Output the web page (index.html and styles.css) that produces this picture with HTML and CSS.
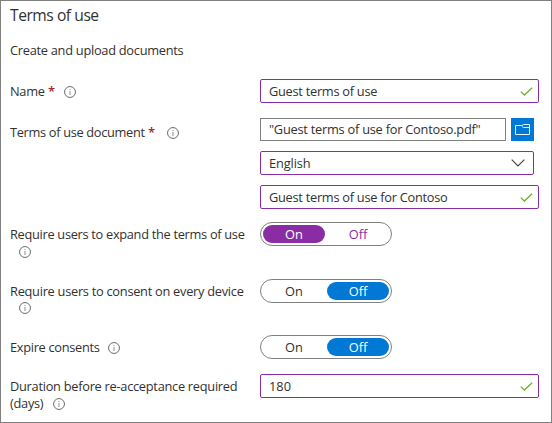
FILE: index.html
```html
<!DOCTYPE html>
<html lang="en">
<head>
<meta charset="utf-8">
<title>Terms of use</title>
<link rel="stylesheet" href="styles.css">
</head>
<body>
<svg width="0" height="0" class="defs">
  <symbol id="info" viewBox="0 0 12 12"><circle cx="6" cy="6" r="5.45" fill="none" stroke="#6b6b6b"/><path d="M6 5v4M6 3v1.1" stroke="#999" stroke-width="1.1"/></symbol>
  <symbol id="check" viewBox="0 0 13 9"><path d="M.8 4.6 4.4 8 12.1.7" fill="none" stroke="#6bb02a" stroke-width="1.3"/></symbol>
</svg>
<main class="panel">
  <h1 class="title">Terms of use</h1>
  <p class="subtitle">Create and upload documents</p>
  <form class="form">
    <div class="row row-name">
      <div class="label"><span class="t-name">Name</span><span class="req">*</span><svg class="info i-name"><use href="#info"/></svg></div>
      <div class="field wide"><span>Guest terms of use</span><svg class="check"><use href="#check"/></svg></div>
    </div>
    <div class="row row-doc">
      <div class="label"><span class="t-doc">Terms of use document</span><span class="req">*</span><svg class="info i-doc"><use href="#info"/></svg></div>
      <div class="stack">
        <div class="picker">
          <div class="field file"><span>"Guest terms of use for Contoso.pdf"</span></div>
          <button type="button" class="browse" aria-label="Browse"><svg width="15" height="11" viewBox="0 0 15 11"><path d="M7 1.5H.5v9h14v-9M7 1.5 8.500.5h6v3h-6L7 2.500" fill="none" stroke="#e4f1fb"/></svg></button>
        </div>
        <div class="field select"><span class="v-lang">English</span><svg class="chevron" width="14" height="8" viewBox="0 0 14 8"><path d="M.7.7 7 7 13.3.7" fill="none" stroke="#444" stroke-width="1.2"/></svg></div>
        <div class="field wide"><span>Guest terms of use for Contoso</span><svg class="check"><use href="#check"/></svg></div>
      </div>
    </div>
    <div class="row row-expand">
      <div class="label two"><span class="t-expand">Require users to expand the terms of use</span><svg class="info i-wrap"><use href="#info"/></svg></div>
      <div class="toggle purple"><span class="opt on">On</span><span class="opt">Off</span></div>
    </div>
    <div class="row row-device">
      <div class="label two"><span>Require users to consent on every device</span><svg class="info i-wrap"><use href="#info"/></svg></div>
      <div class="toggle"><span class="opt">On</span><span class="opt on">Off</span></div>
    </div>
    <div class="row row-expire">
      <div class="label"><span class="t-expire">Expire consents</span><svg class="info i-expire"><use href="#info"/></svg></div>
      <div class="toggle"><span class="opt">On</span><span class="opt on">Off</span></div>
    </div>
    <div class="row row-days">
      <div class="label two"><span>Duration before re-acceptance required</span><div class="line"><span class="t-days">(days)</span><svg class="info i-days"><use href="#info"/></svg></div></div>
      <div class="field wide"><span class="v-days">180</span><svg class="check"><use href="#check"/></svg></div>
    </div>
  </form>
</main>
</body>
</html>
```
FILE: styles.css
```css
* { box-sizing: border-box; }
body { margin: 0; background: #fff; }
.defs { display: none; }
.panel {
  width: 552px;
  height: 423px;
  border: 1px solid #808080;
  padding: 0 0 0 9px;
  overflow: hidden;
  color: #323130;
  font: 12.8px/17px "Open Sans", "Noto Sans", sans-serif;
  letter-spacing: -0.27px;
  white-space: nowrap;
}
.title { margin: 3px 0 0; font-size: 15.6px; line-height: 22px; font-weight: 400; letter-spacing: -0.45px; }
.subtitle { margin: 16px 0 0; line-height: 17px; letter-spacing: -0.27px; }
.form { display: flex; flex-direction: column; margin-top: 20px; }
.row { display: grid; grid-template-columns: 250px 279px; align-items: start; }
.row-name { height: 39px; }
.row-doc { height: 104px; }
.row-expand { height: 57px; }
.row-device { height: 56px; }
.row-expire { height: 39px; }
.row-days { height: 40px; }
.label { display: flex; align-items: center; height: 17px; margin-top: 4px; }
.row-doc .label { margin-top: 6px; }
.label.two { flex-direction: column; align-items: flex-start; height: 34px; }
.line { display: flex; align-items: center; }
.t-name { width: 34px; }
.t-doc { width: 134px; letter-spacing: -0.32px; }
.t-expand { letter-spacing: -0.3px; }
.t-expire { width: 89px; letter-spacing: -0.3px; }
.t-days { width: 34px; }
.req { width: 7px; margin-left: 4px; color: #a4262c; font-size: 13px; font-weight: 600; line-height: 17px; }
.info { width: 12px; height: 12px; flex: none; }
.i-name { margin-left: 9px; }
.i-doc { margin-left: 12px; }
.i-wrap { margin: 3px 0 0 9px; }
.row-device .i-wrap { margin-top: 2px; }
.i-expire { margin-left: 9px; }
.i-days { margin-left: 9px; }
.field {
  display: flex;
  align-items: center;
  justify-content: space-between;
  height: 24px;
  padding: 0 5px 0 8px;
  border: 1px solid #8a2da5;
  border-radius: 2px;
  background: #fff;
}
.wide { width: 279px; }
.v-lang { letter-spacing: -0.1px; }
.v-days { letter-spacing: 0; }
.check { width: 13px; height: 9px; }
.stack { display: flex; flex-direction: column; gap: 10px; }
.picker { display: flex; gap: 5px; height: 23px; }
.file { width: 246px; height: 23px; padding-bottom: 1px; border-color: #808080; border-radius: 0; letter-spacing: -0.24px; }
.browse { display: grid; place-items: center; width: 23px; height: 23px; padding: 0; border: 0; background: #0078d4; }
.select { width: 274px; padding-right: 8px; }
.toggle {
  display: flex;
  gap: 2px;
  width: 132px;
  height: 24px;
  padding: 2px;
  border: 1px solid #808080;
  border-radius: 12px;
}
.opt { width: 62px; height: 18px; border-radius: 9px; text-align: center; line-height: 19px; letter-spacing: 0; }
.opt.on { background: #0078d4; color: #fff; }
.purple .opt { color: #8a2da5; }
.purple .opt.on { background: #8a2da5; color: #fff; }
```
